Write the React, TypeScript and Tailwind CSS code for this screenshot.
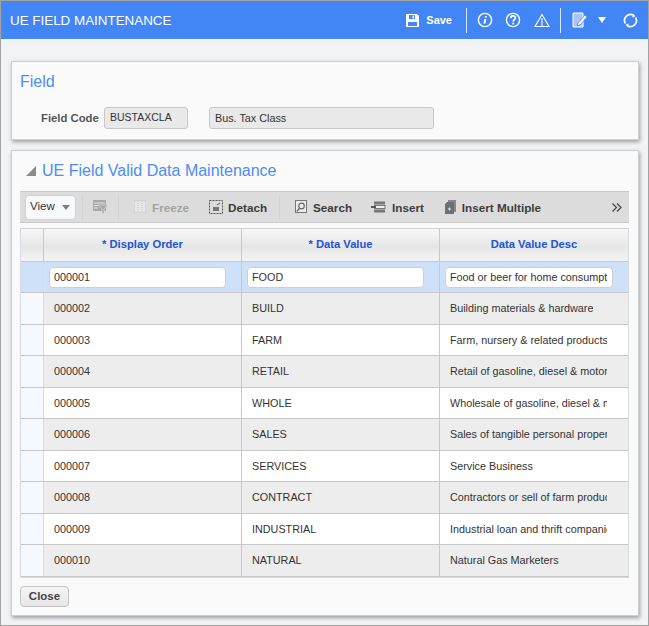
/**
 * UE Field Maintenance form: blue title bar, field card, valid data grid.
 */
const ROWS = [
  ['000002', 'BUILD', 'Building materials & hardware'],
  ['000003', 'FARM', 'Farm, nursery & related products'],
  ['000004', 'RETAIL', 'Retail of gasoline, diesel & motor vehicles'],
  ['000005', 'WHOLE', 'Wholesale of gasoline, diesel & motor'],
  ['000006', 'SALES', 'Sales of tangible personal property'],
  ['000007', 'SERVICES', 'Service Business'],
  ['000008', 'CONTRACT', 'Contractors or sell of farm products'],
  ['000009', 'INDUSTRIAL', 'Industrial loan and thrift companies'],
  ['000010', 'NATURAL', 'Natural Gas Marketers'],
];

function HeaderIcons() {
  return (
    <div className="flex items-center text-white">
      <svg width="15" height="15" viewBox="0 0 15 15" fill="white">
        <path d="M1 1h11l2 2v11H1z" />
        <rect x="4" y="2" width="6" height="4" fill="#4285f4" />
        <rect x="7.5" y="2.5" width="1.5" height="3" fill="white" />
        <rect x="3" y="9" width="9" height="4" fill="#4285f4" />
      </svg>
      <span className="ml-[6px] text-[11px] font-bold">Save</span>
      <div className="ml-[14px] h-[25px] w-px bg-white/80" />
      <svg className="ml-[10px]" width="16" height="16" viewBox="0 0 16 16" fill="none" stroke="white" strokeWidth="1.4">
        <circle cx="8" cy="8" r="6.6" />
        <path d="M8.8 4v1.4M8.4 7l-1 4.6" strokeWidth="2" />
      </svg>
      <svg className="ml-[12px]" width="16" height="16" viewBox="0 0 16 16" fill="none" stroke="white" strokeWidth="1.4">
        <circle cx="8" cy="8" r="6.6" />
        <path d="M5.800 6.200c0-3 4.600-3 4.600-.2 0 1.700-2.200 1.700-2.200 3.400" strokeWidth="1.7" />
        <path d="M8.200 10.600v1.800" strokeWidth="1.8" />
      </svg>
      <svg className="ml-[13px]" width="16" height="15" viewBox="0 0 16 15" fill="none" stroke="white" strokeWidth="1.1">
        <path d="M8 1.500 15 13.500H1z" />
        <path d="M8 5v8" />
      </svg>
      <div className="ml-[10px] h-[25px] w-px bg-white/80" />
      <svg className="ml-[11px]" width="16" height="16" viewBox="0 0 16 16" fill="none">
        <path d="M1 1h10v14H1z" fill="#a9c4f6" stroke="white" strokeWidth="1" />
        <path d="M5 14l1-3 7-8 2 2-7 8z" fill="white" stroke="#4285f4" strokeWidth="0.8" />
      </svg>
      <svg className="ml-[10px]" width="8" height="6" viewBox="0 0 8 6" fill="white">
        <path d="M0 0h8L4 6z" />
      </svg>
      <svg className="ml-[17px]" width="15" height="15" viewBox="0 0 15 15" fill="none" stroke="white" strokeWidth="1.7">
        <path d="M2.400 10.500A6 6 0 0 1 10.800 2.400" />
        <path d="M12.600 4.500A6 6 0 0 1 4.200 12.600" />
        <path d="M10 0.800l2 2.400-2.600 1" fill="white" strokeWidth="0.5" />
        <path d="M5 14.200l-2-2.400 2.600-1" fill="white" strokeWidth="0.5" />
      </svg>
    </div>
  );
}

function ToolbarIcon({ kind, dim }: { kind: string; dim?: boolean }) {
  const c = dim ? '#a8a8a8' : '#707070';
  if (kind === 'filter') {
    return (
      <svg width="15" height="14" viewBox="0 0 15 14">
        <rect x="0" y="0" width="13" height="11" fill={c} />
        <path d="M1 3h11M1 5.500h5M1 8h4" stroke="#e4e4e4" />
        <path d="M5 5h10l-4 4v5l-2-1V9z" fill={c} stroke="#dcdcdc" strokeWidth="0.6" />
      </svg>
    );
  }
  if (kind === 'freeze') {
    return (
      <svg width="12" height="13" viewBox="0 0 12 13">
        <rect x="0.5" y="0.5" width="11" height="12" fill="#e8e8e8" stroke="#d4d4d4" />
        <path d="M4 1v11M8 1v11" stroke="#c4c4c4" strokeDasharray="1 1" />
      </svg>
    );
  }
  if (kind === 'detach') {
    return (
      <svg width="14" height="14" viewBox="0 0 14 14" fill="none">
        <rect x="0.5" y="0.5" width="13" height="13" stroke="#555" strokeDasharray="2 1" />
        <rect x="4" y="7" width="6" height="4" fill="#777" />
        <path d="M8 5l3-2" stroke="#555" />
      </svg>
    );
  }
  if (kind === 'search') {
    return (
      <svg width="13" height="14" viewBox="0 0 13 14" fill="none">
        <rect x="0.5" y="0.5" width="11" height="12" fill="#ececec" stroke="#777" />
        <circle cx="6.500" cy="6" r="2.800" stroke="#666" strokeWidth="1.2" />
        <path d="M4.600 8.200 1.800 11.400" stroke="#666" strokeWidth="1.4" />
      </svg>
    );
  }
  if (kind === 'insert') {
    return (
      <svg width="15" height="12" viewBox="0 0 15 12" fill="none">
        <rect x="3" y="0.5" width="11" height="3" fill="#777" />
        <rect x="3.500" y="4.500" width="10.500" height="3" fill="#efefef" stroke="#777" />
        <rect x="3" y="8.500" width="11" height="3" fill="#777" />
        <path d="M0 6h5" stroke="#555" strokeWidth="2" />
      </svg>
    );
  }
  return (
    <svg width="11" height="14" viewBox="0 0 11 14">
      <path d="M3 0h8v12H9V2H3z" fill="#888" />
      <path d="M2 2h7v12H0V4z" fill="#6f6f6f" />
      <path d="M3 9h3M4.500 7.500v3" stroke="#e4e4e4" />
    </svg>
  );
}

function ToolbarButton({ icon, label, className = '', dim }: { icon: string; label: string; className?: string; dim?: boolean }) {
  return (
    <div className={`flex items-center text-[11.7px] font-bold ${dim ? 'text-[#a3a3a3]' : 'text-[#3d3d3d]'} ${className}`}>
      <ToolbarIcon kind={icon} dim={dim} />
      <span className="pt-px">{label}</span>
    </div>
  );
}

function RowCells({ cells, even }: { cells: string[]; even: boolean }) {
  return (
    <div className={`flex h-[31.5px] border-b border-[#c8c8c8] text-[10.8px] text-[#333] ${even ? 'bg-[#ededed]' : 'bg-white'}`}>
      <div className="w-[23px] shrink-0 border-r border-[#d5dbe6] bg-[#f5f8fd]" />
      <div className="flex w-[198px] shrink-0 items-center border-r border-[#c8c8c8] pl-[10px]">{cells[0]}</div>
      <div className="flex w-[198px] shrink-0 items-center border-r border-[#c8c8c8] pl-[10px]">{cells[1]}</div>
      <div className="flex min-w-0 flex-1 items-center pl-[10px] pr-[21px]">
        <span className="overflow-hidden whitespace-nowrap">{cells[2]}</span>
      </div>
    </div>
  );
}

function TextBox({ value, className }: { value: string; className: string }) {
  return (
    <div className={`flex h-[21px] items-center rounded-[4px] border border-[#cfcfcf] bg-white pl-[4px] pr-[5px] pt-px text-[10.8px] text-[#333] ${className}`}>
      <span className="overflow-hidden whitespace-nowrap">{value}</span>
    </div>
  );
}

export default function App() {
  return (
    <div className="flex h-[626px] w-[649px] flex-col overflow-hidden border border-[#a3a3a3] bg-[#f2f3f5] font-['Liberation_Sans',Arial,sans-serif]">
      <header className="flex h-[38px] shrink-0 items-center justify-between bg-[#4285f4] pl-[9px] pr-[10px]">
        <h1 className="pt-[2px] text-[13.4px] font-normal text-white">UE FIELD MAINTENANCE</h1>
        <HeaderIcons />
      </header>

      <section className="ml-[10px] mr-[9px] mt-[22px] h-[79px] shrink-0 border border-[#d0d0d0] bg-[#fafafa] shadow-[1px_2px_4px_rgba(0,0,0,0.35)]">
        <h2 className="ml-[8px] mt-[10px] text-[16px] leading-[20px] text-[#4d8df5]">Field</h2>
        <div className="mt-[15px] flex items-center">
          <span className="ml-[29px] w-[58px] whitespace-nowrap text-[11.3px] font-bold text-[#555]">Field Code</span>
          <div className="ml-[5px] flex h-[22px] w-[84px] items-start rounded-[3px] border border-[#c8c8c8] bg-[#e9e9e9] pl-[5px] pt-[2px] text-[10.5px] text-[#333]">BUSTAXCLA</div>
          <div className="ml-[21px] flex h-[22px] w-[225px] items-start rounded-[3px] border border-[#c8c8c8] bg-[#e9e9e9] pl-[5px] pt-[1.5px] text-[10.8px] text-[#333]">Bus. Tax Class</div>
        </div>
      </section>

      <section className="ml-[10px] mr-[9px] mt-[10px] flex h-[466px] shrink-0 flex-col border border-[#d0d0d0] bg-[#fafafa] pl-[8px] pr-[9px] shadow-[1px_2px_4px_rgba(0,0,0,0.35)]">
        <div className="mt-[8px] flex h-[24px] items-center">
          <svg className="ml-[6px]" width="10" height="10" viewBox="0 0 10 10" fill="#8c8c8c">
            <path d="M10 0v10H0z" />
          </svg>
          <h2 className="ml-[6px] text-[16px] text-[#4d8df5]">UE Field Valid Data Maintenance</h2>
        </div>

        <div className="mt-[8px] flex h-[32px] shrink-0 items-center border-y border-[#c9c9c9] bg-[#dcdcdc]">
          <div className="ml-[5px] flex h-[25px] w-[51px] shrink-0 items-center rounded-[4px] border border-[#cfd3d8] bg-[#f8f9fb] pl-[4px] text-[11.5px] text-[#333]">
            View
            <svg className="ml-[7px]" width="8" height="5" viewBox="0 0 8 5" fill="#808080">
              <path d="M0 0h8L4 5z" />
            </svg>
          </div>
          <div className="ml-[6px] h-[25px] w-px bg-[#d0d4d9]" />
          <div className="ml-[10px]"><ToolbarIcon kind="filter" dim /></div>
          <div className="ml-[10px] h-[25px] w-px bg-[#d0d4d9]" />
          <ToolbarButton icon="freeze" label="Freeze" dim className="ml-[15px] gap-[6px]" />
          <ToolbarButton icon="detach" label="Detach" className="ml-[20px] gap-[5px]" />
          <div className="ml-[12px] h-[25px] w-px bg-[#d0d4d9]" />
          <ToolbarButton icon="search" label="Search" className="ml-[15px] gap-[5px]" />
          <ToolbarButton icon="insert" label="Insert" className="ml-[19px] gap-[6px]" />
          <ToolbarButton icon="multi" label="Insert Multiple" className="ml-[21px] gap-[6px]" />
          <svg className="ml-auto mr-[7px]" width="10" height="9" viewBox="0 0 10 9" fill="none" stroke="#444" strokeWidth="1.2">
            <path d="M0.500 0.500 4.500 4.500 0.500 8.500" />
            <path d="M5 0.500 9 4.500 5 8.500" />
          </svg>
        </div>

        <div className="mt-[5px] border border-[#d5dbe6] border-t-[#d0d0d0]">
          <div className="flex h-[33px] border-b border-[#c8c8c8] bg-[linear-gradient(#f8f8f8,#e6e6e6_55%,#f4f4f4)] text-[11.2px] font-bold text-[#1a56d6]">
            <div className="w-[23px] shrink-0 border-r border-[#c8c8c8]" />
            <div className="flex w-[198px] shrink-0 items-center justify-center border-r border-[#c8c8c8] pb-px">* Display Order</div>
            <div className="flex w-[198px] shrink-0 items-center justify-center border-r border-[#c8c8c8] pb-px">* Data Value</div>
            <div className="flex min-w-0 flex-1 items-center justify-center pb-px">Data Value Desc</div>
          </div>
          <div className="flex h-[31px] items-center border-b border-[#c8c8c8] bg-[#cfe0f9]">
            <div className="h-full w-[23px] shrink-0 border-r border-[#d5dbe6]" />
            <div className="flex h-full w-[198px] shrink-0 items-center border-r border-[#c8c8c8] pl-[5px]">
              <TextBox value="000001" className="w-[177px]" />
            </div>
            <div className="flex h-full w-[198px] shrink-0 items-center border-r border-[#c8c8c8] pl-[5px]">
              <TextBox value="FOOD" className="w-[177px]" />
            </div>
            <div className="flex h-full min-w-0 flex-1 items-center pl-[5px]">
              <TextBox value="Food or beer for home consumption" className="w-[168px]" />
            </div>
          </div>
          {ROWS.map((r, i) => (
            <RowCells key={r[0]} cells={r} even={i % 2 === 0} />
          ))}
        </div>

        <button className="mt-[8.5px] h-[21px] w-[49px] rounded-[4px] border border-[#c4c4c4] bg-[linear-gradient(#f6f6f6,#e6e6e6)] text-[11.5px] font-bold text-[#444]">Close</button>
      </section>
    </div>
  );
}
